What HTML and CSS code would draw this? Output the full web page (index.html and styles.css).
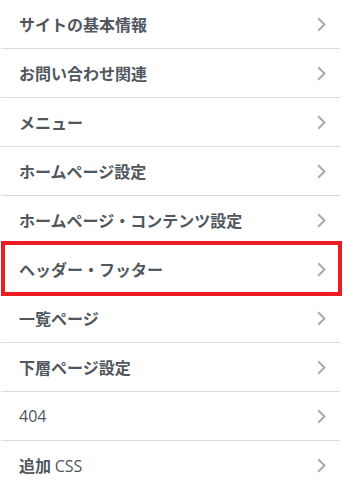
FILE: index.html
```
<!DOCTYPE html>
<html>
<head>
<title>Customizer</title>
<link rel="stylesheet" href="styles.css">
</head>
<body>

<ul class="panelList">
<li class="panelItem"><span class="panelTitle">サイトの基本情報</span><svg class="chevron" width="9" height="15" viewBox="0 0 9 15"><polyline points="1.2,1.2 7.5,7.5 1.2,13.8"/></svg></li>
<li class="panelItem"><span class="panelTitle">お問い合わせ関連</span><svg class="chevron" width="9" height="15" viewBox="0 0 9 15"><polyline points="1.2,1.2 7.5,7.5 1.2,13.8"/></svg></li>
<li class="panelItem"><span class="panelTitle">メニュー</span><svg class="chevron" width="9" height="15" viewBox="0 0 9 15"><polyline points="1.2,1.2 7.5,7.5 1.2,13.8"/></svg></li>
<li class="panelItem"><span class="panelTitle">ホームページ設定</span><svg class="chevron" width="9" height="15" viewBox="0 0 9 15"><polyline points="1.2,1.2 7.5,7.5 1.2,13.8"/></svg></li>
<li class="panelItem"><span class="panelTitle">ホームページ・コンテンツ設定</span><svg class="chevron" width="9" height="15" viewBox="0 0 9 15"><polyline points="1.2,1.2 7.5,7.5 1.2,13.8"/></svg></li>
<li class="panelItem highlighted"><span class="panelTitle">ヘッダー・フッター</span><svg class="chevron" width="9" height="15" viewBox="0 0 9 15"><polyline points="1.2,1.2 7.5,7.5 1.2,13.8"/></svg></li>
<li class="panelItem"><span class="panelTitle">一覧ページ</span><svg class="chevron" width="9" height="15" viewBox="0 0 9 15"><polyline points="1.2,1.2 7.5,7.5 1.2,13.8"/></svg></li>
<li class="panelItem"><span class="panelTitle">下層ページ設定</span><svg class="chevron" width="9" height="15" viewBox="0 0 9 15"><polyline points="1.2,1.2 7.5,7.5 1.2,13.8"/></svg></li>
<li class="panelItem"><span class="panelTitle latin">404</span><svg class="chevron" width="9" height="15" viewBox="0 0 9 15"><polyline points="1.2,1.2 7.5,7.5 1.2,13.8"/></svg></li>
<li class="panelItem"><span class="panelTitle">追加 <span class="latin">CSS</span></span><svg class="chevron" width="9" height="15" viewBox="0 0 9 15"><polyline points="1.2,1.2 7.5,7.5 1.2,13.8"/></svg></li>
</ul>

</body>
</html>
```

FILE: styles.css
```
body {
    margin: 0;
    background-color: #fff;
}
.panelList {
    list-style-type: none;
    margin: 0 3px 0 1px;
    padding: 0;
}
.panelItem {
    position: relative;
    display: flex;
    align-items: center;
    justify-content: space-between;
    height: 48px;
    padding: 0 14px 0 18px;
    border-bottom: 1px solid #dcdcde;
    font: 700 16px "Noto Sans CJK JP", sans-serif;
    color: #50575e;
}
.latin {
    font-family: "Open Sans", sans-serif;
    font-weight: 500;
}
/* red marker round the selected row */
.panelItem.highlighted::after {
    content: "";
    position: absolute;
    top: -4px;
    bottom: -3px;
    left: 0;
    right: -2px;
    border: 4px solid #ea1c24;
}
.chevron {
    fill: none;
    stroke: #a7aaad;
    stroke-width: 2;
}
```
